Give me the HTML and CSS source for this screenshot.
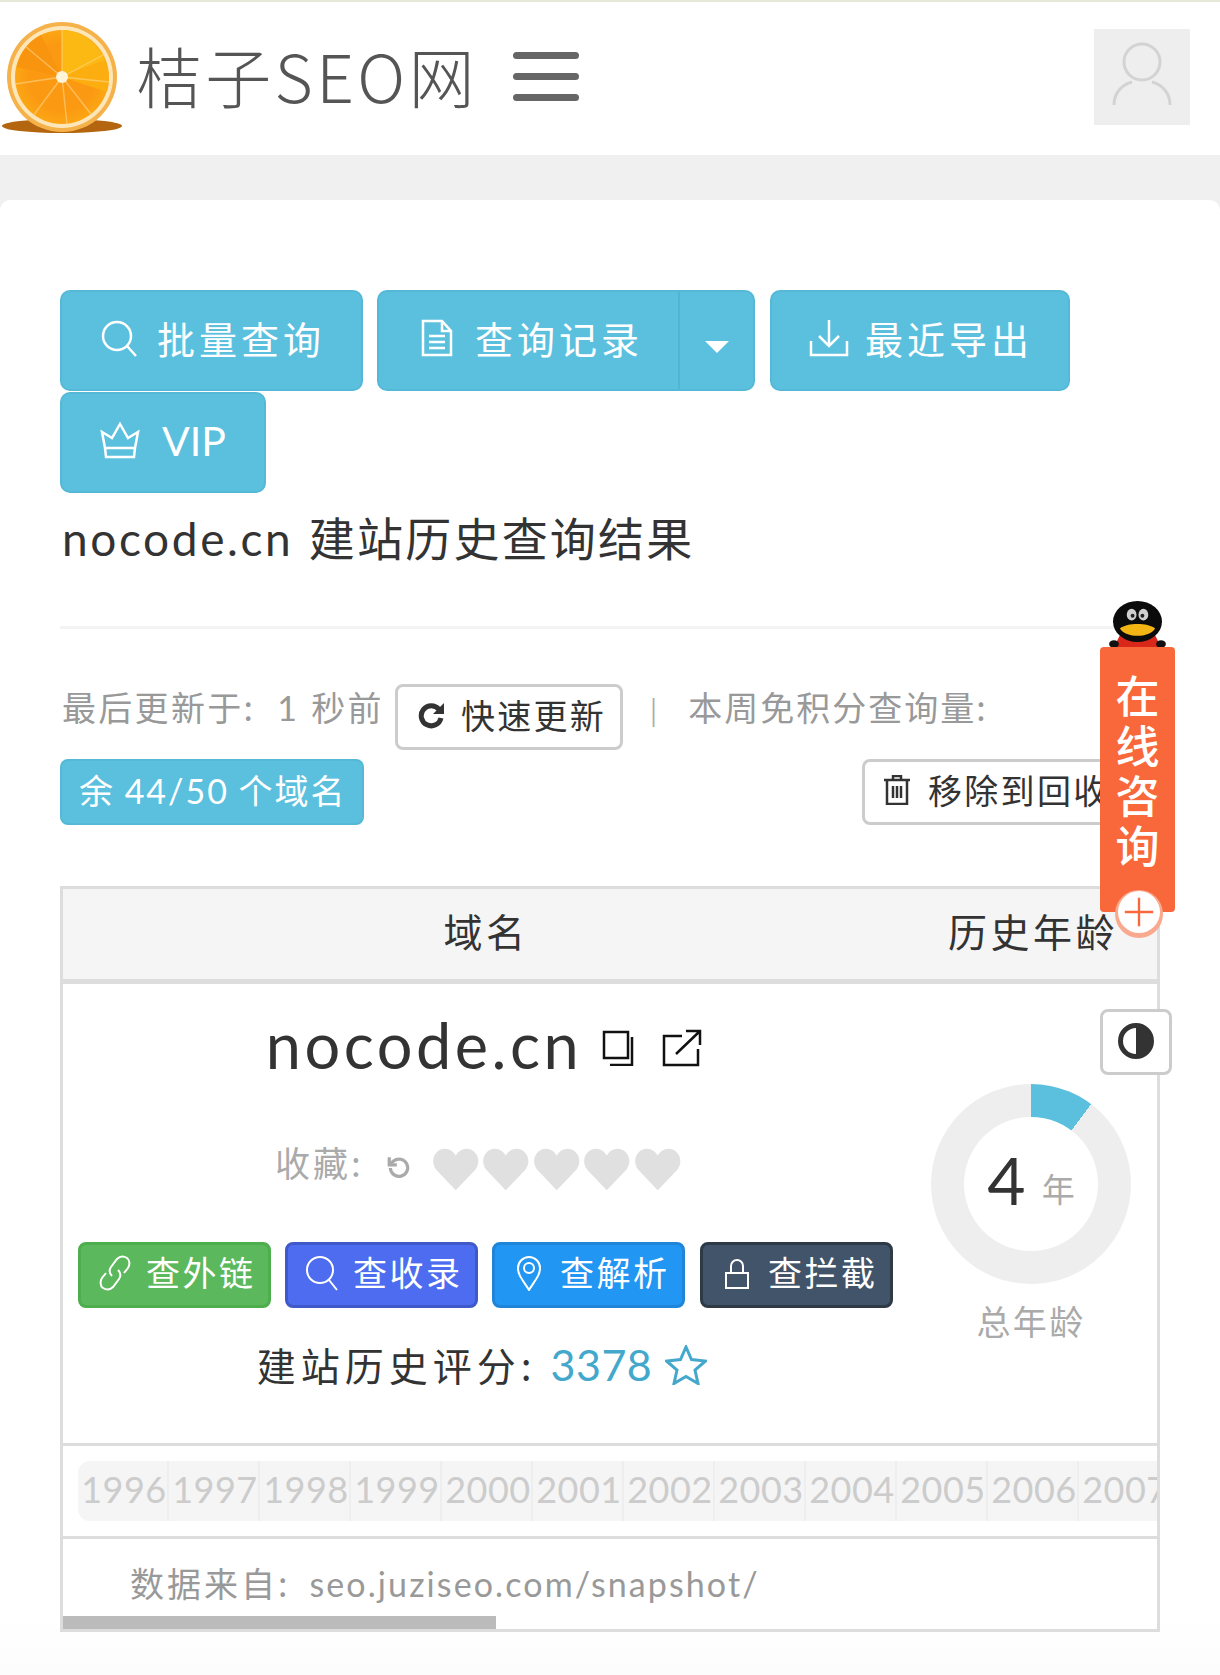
FILE: index.html
```html
<!DOCTYPE html>
<html lang="zh-CN">
<head>
<meta charset="utf-8">
<title>nocode.cn 建站历史查询结果</title>
<link rel="stylesheet" href="styles.css">
</head>
<body>
<header class="topbar">
  <svg class="logo" viewBox="0 0 123 115" aria-hidden="true">
    <defs>
      <radialGradient id="pulp" cx="0.5" cy="0.5" r="0.6">
        <stop offset="0" stop-color="#fb9a12"/>
        <stop offset="0.6" stop-color="#fb9a12"/>
        <stop offset="1" stop-color="#fdae15"/>
      </radialGradient>
    </defs>
    <ellipse cx="61" cy="104" rx="60" ry="7" fill="#b4650f"/>
    <circle cx="61" cy="55" r="55" fill="#f6b24a"/>
    <circle cx="61" cy="55" r="51" fill="#fde7ba"/>
    <circle cx="61" cy="55" r="47" fill="url(#pulp)"/>
    <path d="M61 8 A47 47 0 0 1 104 38 L61 55Z" fill="#fdb913"/>
    <path d="M104 38 A47 47 0 0 1 106 70 L61 55Z" fill="#fcae10"/>
    <path d="M16 45 A47 47 0 0 1 40 13 L61 55Z" fill="#f9940f"/>
    <path d="M61 55 L61 8 M61 55 L104 32 M61 55 L108 60 M61 55 L90 92 M61 55 L66 102 M61 55 L32 94 M61 55 L14 62 M61 55 L24 24" stroke="#ffd68a" stroke-opacity="0.6" stroke-width="1.4" fill="none"/>
    <circle cx="61" cy="55" r="6" fill="#fff4d8"/>
  </svg>
  <span class="brand">桔子SEO网</span>
  <div class="burger"><i></i><i></i><i></i></div>
  <div class="avatar">
    <svg viewBox="0 0 96 96" class="avatar-icon" aria-hidden="true">
      <circle cx="48" cy="33" r="18"/>
      <path d="M20 76 C20 62 30 55 38 53 M76 76 C76 62 66 55 58 53"/>
    </svg>
  </div>
</header>

<div class="page">
<main class="card">
  <nav class="toolbar">
    <a class="btn btn-a">
      <svg class="ico" viewBox="0 0 38 38"><circle cx="17" cy="17" r="14"/><path d="M27 27l9 10"/></svg>
      <span class="btn-text">批量查询</span>
    </a>
    <div class="btn btn-b">
      <span class="btn-main">
        <svg class="ico ico-doc" viewBox="0 0 32 38"><path d="M2 2h19l9 10v24H2zM21 2v10h9M8 17h16M8 23h16M8 29h16"/></svg>
        <span class="btn-text">查询记录</span>
      </span>
      <span class="btn-caret"><i class="caret"></i></span>
    </div>
    <a class="btn btn-c">
      <svg class="ico ico-dl" viewBox="0 0 40 38"><path d="M20 1v26M10 17l10 10 10-10M2 22v14h36V22"/></svg>
      <span class="btn-text">最近导出</span>
    </a>
    <a class="btn btn-d">
      <svg class="ico ico-crown" viewBox="0 0 40 38"><path d="M5 27L2 11l10 6L20 3l8 14 10-6-3 16zM5 27l1 9h28l1-9"/></svg>
      <span class="lat vip">VIP</span>
    </a>
  </nav>

  <h1 class="title"><span class="lat title-lat">nocode.cn</span> 建站历史查询结果</h1>
  <hr class="rule">

  <div class="info-row">
    <span class="muted">最后更新于:<span class="lat gap-num">1</span>秒前</span>
    <a class="btn-line btn-refresh">
      <svg class="ico-r" viewBox="0 0 28 28"><path d="M22 8.500A10 10 0 1 0 24 17"/><path class="solid" d="M27 2v11H16z"/></svg>
      <span>快速更新</span>
    </a>
    <span class="muted sep">|</span>
    <span class="muted muted-tight">本周免积分查询量:</span>
  </div>

  <div class="quota-row">
    <span class="quota"><span class="quota-text">余 <span class="lat">44/50</span> 个域名</span></span>
    <a class="btn-line btn-trash">
      <svg class="ico-t" viewBox="0 0 28 30"><path d="M1 5h26M4 5v24h20V5M10 5V1h8v4M10 11v12M14 11v12M18 11v12"/></svg>
      <span>移除到回收站</span>
    </a>
  </div>

  <section class="table">
    <div class="thead">
      <div class="col-main th">域名</div>
      <div class="col-side th">历史年龄</div>
    </div>
    <div class="tbody">
      <div class="col-main">
        <div class="domain-row">
          <span class="domain lat">nocode.cn</span>
          <svg class="ico-copy" viewBox="0 0 32 36"><path d="M2 2h24v26H2zM30 7v28H8"/></svg>
          <svg class="ico-ext" viewBox="0 0 40 38"><path d="M20 7H2v29h34V20M14 25L38 2M24 2h14v14"/></svg>
        </div>
        <div class="fav-row">
          <span class="fav-label">收藏:</span>
          <svg class="ico-undo" viewBox="0 0 24 24"><path d="M4 12a8 8 0 1 0 3-6.500L3 9"/><path d="M3 2v7h7" fill="none"/></svg>
          <div class="hearts">
            <svg class="heart" viewBox="0 0 48 44"><path d="M24 43L4 22C-3 12 4 1 13 1c5 0 9 3 11 7 2-4 6-7 11-7 9 0 16 11 9 21z"/></svg>
            <svg class="heart" viewBox="0 0 48 44"><path d="M24 43L4 22C-3 12 4 1 13 1c5 0 9 3 11 7 2-4 6-7 11-7 9 0 16 11 9 21z"/></svg>
            <svg class="heart" viewBox="0 0 48 44"><path d="M24 43L4 22C-3 12 4 1 13 1c5 0 9 3 11 7 2-4 6-7 11-7 9 0 16 11 9 21z"/></svg>
            <svg class="heart" viewBox="0 0 48 44"><path d="M24 43L4 22C-3 12 4 1 13 1c5 0 9 3 11 7 2-4 6-7 11-7 9 0 16 11 9 21z"/></svg>
            <svg class="heart" viewBox="0 0 48 44"><path d="M24 43L4 22C-3 12 4 1 13 1c5 0 9 3 11 7 2-4 6-7 11-7 9 0 16 11 9 21z"/></svg>
          </div>
        </div>
        <div class="action-row">
          <a class="act act-green">
            <svg class="ico-act" viewBox="0 0 32 36"><path d="M13 21c-3-3-3-6-1-9l6-8c3-3 7-3 10-1s3 7 1 10l-4 5M19 15c3 3 3 6 1 9l-6 8c-3 3-7 3-10 1s-3-7-1-10l4-5"/></svg>
            <span>查外链</span>
          </a>
          <a class="act act-indigo">
            <svg class="ico-act" viewBox="0 0 32 36"><circle cx="14" cy="15" r="13"/><path d="M23 25l8 10"/></svg>
            <span>查收录</span>
          </a>
          <a class="act act-blue">
            <svg class="ico-act" viewBox="0 0 26 36"><path d="M13 35C6 24 2 20 2 13a11 11 0 0 1 22 0c0 7-4 11-11 22z"/><circle cx="13" cy="13" r="5"/></svg>
            <span>查解析</span>
          </a>
          <a class="act act-dark">
            <svg class="ico-act" viewBox="0 0 32 36"><path d="M5 18h22v15H5zM10 18V11a6 6 0 0 1 12 0v7"/></svg>
            <span>查拦截</span>
          </a>
        </div>
        <div class="score-row">
          <span>建站历史评分:</span>
          <span class="score lat">3378</span>
          <svg class="ico-star" viewBox="0 0 42 40"><path d="M21 2l5.500 12.500 14 1.500-10.500 9 3 13.500L21 31.500 9 38.500l3-13.500L1.500 16l14-1.500z"/></svg>
        </div>
      </div>
      <div class="col-side age">
        <div class="donut">
          <div class="donut-hole">
            <span class="age-num lat">4</span>
            <span class="age-unit">年</span>
          </div>
        </div>
        <div class="age-label">总年龄</div>
      </div>
    </div>
    <div class="years-row">
      <div class="years">
        <span class="year">1996</span><span class="year">1997</span><span class="year">1998</span><span class="year">1999</span><span class="year">2000</span><span class="year">2001</span><span class="year">2002</span><span class="year">2003</span><span class="year">2004</span><span class="year">2005</span><span class="year">2006</span><span class="year">2007</span>
      </div>
    </div>
    <div class="source-row">数据来自:<span class="lat source-link">seo.juziseo.com/snapshot/</span></div>
    <div class="scrollbar"></div>
  </section>

  <a class="toggle" aria-label="切换">
    <svg viewBox="0 0 36 36" class="ico-half"><circle cx="18" cy="18" r="15.500"/><path class="solid" d="M18 2a16 16 0 0 1 0 32z"/></svg>
  </a>
</main>
</div>

<aside class="consult">
  <svg class="penguin" viewBox="0 0 76 48" aria-hidden="true">
    <path d="M14 48l6-12h36l6 12z" fill="#d9281a"/>
    <ellipse cx="38" cy="22" rx="25" ry="21" fill="#0b0b0b"/>
    <ellipse cx="32" cy="15" rx="5" ry="6" fill="#cfcfcf"/>
    <ellipse cx="44" cy="15" rx="5" ry="6" fill="#cfcfcf"/>
    <circle cx="33" cy="16" r="2" fill="#222"/>
    <circle cx="43" cy="16" r="2" fill="#222"/>
    <path d="M20 29c8-6 28-6 36 0-6 10-30 10-36 0z" fill="#f3b514"/>
    <ellipse cx="14" cy="45" rx="5" ry="4" fill="#111"/>
    <ellipse cx="62" cy="45" rx="5" ry="4" fill="#111"/>
  </svg>
  <div class="consult-body">在线咨询</div>
  <div class="consult-plus"><svg viewBox="0 0 36 36"><path d="M18 3v30M3 18h30"/></svg></div>
</aside>
</body>
</html>
```

FILE: styles.css
```css
* { box-sizing: border-box; }
html, body { margin: 0; padding: 0; }
body {
  width: 1220px;
  min-height: 1675px;
  background: #fff;
  color: #333;
  font-family: "Noto Sans CJK SC", "Noto Sans", sans-serif;
  font-weight: 400;
  position: relative;
  overflow: hidden;
}
a { color: inherit; text-decoration: none; }
.lat { font-family: Lato, "Noto Sans", sans-serif; }

/* top bar */
.topbar {
  height: 155px;
  border-top: 2px solid #e8e8da;
  background: #fff;
  display: flex;
  align-items: center;
  padding-left: 1px;
}
.logo { width: 123px; height: 115px; flex: none; margin-top: 2px; }
.brand {
  margin: -10px 0 0 12px;
  font-size: 66px;
  font-weight: 300;
  line-height: 1;
  color: #555;
  letter-spacing: 3.300px;
  white-space: nowrap;
  width: 377px;
}
.burger { display: flex; flex-direction: column; gap: 14px; width: 66px; margin-top: -5px; }
.burger i { display: block; height: 7px; border-radius: 4px; background: #666; }
.avatar {
  margin: -4px 30px 0 auto;
  width: 96px;
  height: 96px;
  background: #eee;
  display: flex;
  align-items: center;
  justify-content: center;
}
.avatar-icon { width: 96px; height: 96px; fill: none; stroke: #d3d3d3; stroke-width: 3; }

/* card */
.page { background: #f0f0f0; padding-top: 45px; }
.card {
  position: relative;
  padding: 90px 60px 0;
  background: linear-gradient(#fff 1420px, #fcfcfc);
  border-radius: 10px 10px 0 0;
  height: 1475px;
}

/* toolbar */
.toolbar { display: flex; flex-wrap: wrap; column-gap: 14px; row-gap: 1px; }
.btn {
  height: 101px;
  background: #5bc0de;
  border: 2px solid #55b8d6;
  border-radius: 10px;
  color: #fff;
  font-size: 38px;
  letter-spacing: 4px;
  display: flex;
  align-items: center;
  white-space: nowrap;
}
.btn-text { padding-bottom: 7px; }
.vip { font-size: 41px; letter-spacing: 0; padding-bottom: 5px; }
.ico { width: 38px; height: 38px; fill: none; stroke: #fff; stroke-width: 2.500; flex: none; margin-top: -6px; }
.btn-a { width: 303px; padding-left: 38px; gap: 19px; }
.btn-b { width: 378px; padding-left: 42px; }
.btn-main { display: flex; align-items: center; gap: 22px; width: 257px; height: 100%; }
.ico-doc { width: 32px; }
.btn-caret {
  flex: 1;
  height: 100%;
  border-left: 2px solid #50b5d3;
  display: flex;
  align-items: center;
  justify-content: center;
}
.caret {
  display: block;
  margin-top: 12px;
  border-left: 12px solid transparent;
  border-right: 12px solid transparent;
  border-top: 12px solid #fff;
}
.btn-c { width: 300px; margin-left: 1px; padding-left: 37px; gap: 16px; }
.ico-dl { width: 40px; }
.btn-d { width: 206px; padding-left: 38px; gap: 22px; }
.ico-crown { width: 40px; }

.title {
  margin: 17px 0 0 2px;
  font-size: 46px;
  line-height: 52px;
  font-weight: 400;
  letter-spacing: 2.200px;
  color: #333;
}
.title-lat { letter-spacing: 2.600px; margin-right: 3px; }
.rule { border: 0; height: 3px; background: #f3f3f3; margin: 61px 0 0; }

/* info rows */
.info-row { display: flex; align-items: center; margin-top: 55px; height: 66px; margin-left: 2px; }
.muted { color: #999; font-size: 34px; letter-spacing: 2.300px; white-space: nowrap; position: relative; top: -11px; }
.muted-tight { letter-spacing: 2px; }
.gap-num { margin: 0 12px 0 22px; }
.sep { margin: 0 29px 0 27px; font-size: 26px; color: #aaa; top: -9px; }
.btn-line {
  height: 66px;
  border: 3px solid #ccc;
  border-radius: 8px;
  background: #fff;
  color: #333;
  font-size: 34px;
  letter-spacing: 2.300px;
  display: flex;
  align-items: center;
  white-space: nowrap;
}
.btn-line span { padding-bottom: 6px; }
.btn-refresh { margin-left: 11px; width: 228px; padding-left: 19px; gap: 16px; }
.ico-r { width: 28px; height: 28px; fill: none; stroke: #333; stroke-width: 5; flex: none; margin-top: -4px; }
.ico-r .solid { fill: #333; stroke: none; }
.quota-row { display: flex; justify-content: space-between; margin-top: 9px; height: 66px; }
.quota {
  width: 304px;
  background: #5bc0de;
  border: 2px solid #55b8d6;
  border-radius: 8px;
  color: #fff;
  font-size: 34px;
  letter-spacing: 2px;
  display: flex;
  align-items: center;
  padding-left: 17px;
  white-space: nowrap;
}
.quota-text { padding-bottom: 6px; }
.btn-trash { width: 298px; padding-left: 18px; gap: 17px; overflow: hidden; }
.ico-t { width: 28px; height: 30px; fill: none; stroke: #333; stroke-width: 2.500; flex: none; margin-top: -4px; }

/* table */
.table {
  position: relative;
  margin-top: 61px;
  width: 1100px;
  border: 3px solid #ddd;
  overflow: hidden;
}
.thead { display: flex; height: 95px; background: #f5f5f5; border-bottom: 5px solid #ddd; }
.col-main { width: 842px; flex: none; }
.col-side { width: 252px; flex: none; }
.th { display: flex; align-items: center; justify-content: center; font-size: 39px; letter-spacing: 3.500px; white-space: nowrap; padding: 0 0 8px 4px; }
.tbody { display: flex; height: 459px; }
.domain-row { display: flex; align-items: center; justify-content: center; height: 124px; }
.domain { font-size: 63px; letter-spacing: 3.500px; color: #333; padding-bottom: 4px; }
.ico-copy { width: 32px; height: 36px; margin: 4px 0 0 20px; fill: none; stroke: #111; stroke-width: 2.500; }
.ico-ext { width: 40px; height: 38px; margin: 3px 0 0 28px; fill: none; stroke: #111; stroke-width: 2.500; }
.fav-row { display: flex; align-items: center; justify-content: center; height: 60px; margin-top: 29px; padding-right: 12px; }
.fav-label { color: #aaa; font-size: 35px; letter-spacing: 3px; padding-bottom: 12px; }
.ico-undo { width: 26px; height: 26px; margin-left: 22px; fill: none; stroke: #aaa; stroke-width: 3; margin-top: 2px; }
.hearts { display: flex; gap: 3px; margin: 4px 0 0 20px; }
.heart { width: 47.500px; height: 45px; fill: #e0e0e0; }
.action-row { display: flex; gap: 14px; margin: 45px 0 0 15px; }
.act {
  width: 193px;
  height: 66px;
  border-radius: 8px;
  border: 3px solid;
  color: #fff;
  font-size: 34px;
  letter-spacing: 2.500px;
  display: flex;
  align-items: center;
  padding-left: 18px;
  gap: 15px;
  white-space: nowrap;
}
.act span { padding-bottom: 8px; }
.act-dark { margin-left: 1px; }
.ico-act { width: 32px; height: 36px; fill: none; stroke: #fff; stroke-width: 2; flex: none; margin-top: -4px; }
.act-green { background: #5cb85c; border-color: #4cae4c; }
.act-indigo { background: #4d6cef; border-color: #3f59c9; }
.act-blue { background: #2196f3; border-color: #1e85d8; }
.act-dark { background: #415469; border-color: #2f3a47; }
.score-row { display: flex; align-items: center; justify-content: center; height: 60px; margin-top: 29px; font-size: 39px; letter-spacing: 5px; white-space: nowrap; padding: 0 4px 6px 0; }
.score { color: #43a8cb; font-size: 43px; letter-spacing: .5px; margin-left: 14px; }
.ico-star { width: 42px; height: 40px; margin: 2px 0 0 13px; fill: none; stroke: #43a8cb; stroke-width: 3; }

/* age column */
.age { display: flex; flex-direction: column; align-items: center; padding-top: 100px; }
.donut {
  width: 200px;
  height: 200px;
  border-radius: 50%;
  background: conic-gradient(#5bc0de 0 37deg, #eee 37deg 360deg);
  display: flex;
  align-items: center;
  justify-content: center;
}
.donut-hole {
  width: 134px;
  height: 134px;
  border-radius: 50%;
  background: #fff;
  display: flex;
  align-items: center;
  justify-content: center;
  gap: 16px;
}
.age-num { font-size: 66px; line-height: 1; color: #333; margin-bottom: 8px; }
.age-unit { color: #aaa; font-size: 33px; line-height: 1; margin-top: 8px; }
.age-label { color: #aaa; font-size: 34px; letter-spacing: 2.300px; margin-top: 12px; white-space: nowrap; }

/* years */
.years-row { height: 93px; border-top: 3px solid #ddd; padding: 15px 0 0 15px; overflow: hidden; }
.years { display: flex; height: 60px; background: #f5f5f5; border-radius: 12px 0 0 12px; width: 1100px; }
.year {
  flex: none;
  width: 91px;
  border-right: 2px solid #eee;
  color: #ccc;
  font-family: Lato, "Noto Sans", sans-serif;
  font-size: 36px;
  line-height: 56px;
  text-align: center;
  letter-spacing: .5px;
  padding-left: 3px;
}
.source-row {
  height: 93px;
  border-top: 3px solid #ddd;
  padding: 19px 0 0 67px;
  color: #999;
  font-size: 34px;
  letter-spacing: 3px;
  white-space: nowrap;
}
.source-link { margin-left: 19px; letter-spacing: 2.100px; }
.scrollbar { position: absolute; left: 0; bottom: 0; width: 433px; height: 13px; background: #bbb; }

.toggle {
  position: absolute;
  left: 1100px;
  top: 809px;
  width: 72px;
  height: 66px;
  background: #fff;
  border: 3px solid #ccc;
  border-radius: 8px;
  display: flex;
  align-items: center;
  justify-content: center;
}
.ico-half { width: 36px; height: 36px; fill: none; stroke: #333; stroke-width: 5; margin-top: -2px; }
.ico-half .solid { fill: #333; stroke: none; }

/* floating consult tab */
.consult { position: absolute; left: 1100px; top: 600px; width: 75px; }
.penguin { display: block; width: 75px; height: 47px; }
.consult-body {
  width: 75px;
  height: 265px;
  background: #f9683a;
  border-radius: 4px;
  color: #fff;
  font-size: 44px;
  font-weight: 500;
  line-height: 50px;
  padding: 22px 15px 0;
  text-align: center;
}
.consult-plus {
  position: absolute;
  left: 18px;
  top: 291px;
  width: 42px;
  height: 42px;
  border-radius: 50%;
  background: #fff;
  box-shadow: 0 2px 0 3px #f9a98e;
  display: flex;
  align-items: center;
  justify-content: center;
}
.consult-plus svg { width: 34px; height: 34px; fill: none; stroke: #f9683a; stroke-width: 2.500; }
```
